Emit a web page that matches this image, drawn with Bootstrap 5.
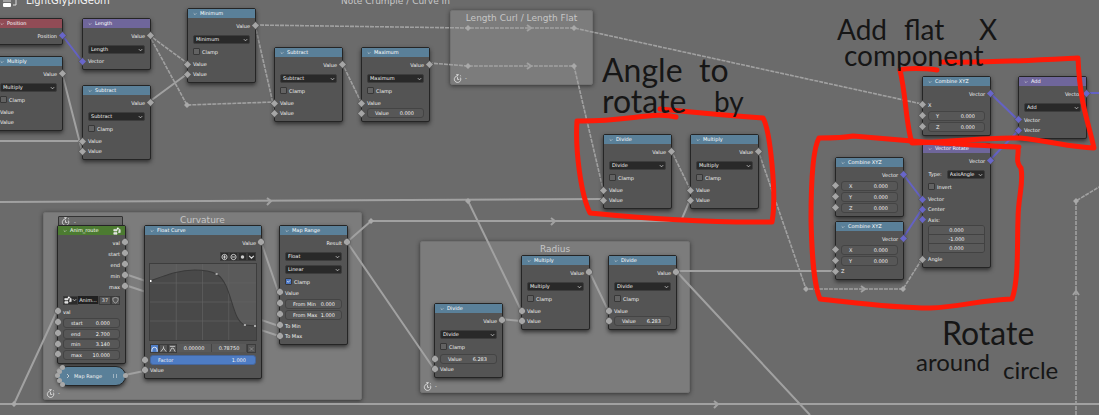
<!DOCTYPE html>
<html lang="en">
<head>
<meta charset="utf-8">
<meta name="viewport" content="width=device-width, initial-scale=1">
<title>LightGlyphGeom</title>
<link rel="stylesheet" href="https://cdn.jsdelivr.net/npm/bootstrap@5.3.0/dist/css/bootstrap.min.css">
<style>
body{background:#6b6b6b;color:#f2f2f2;font:5px/10px "DejaVu Sans",sans-serif}
.board{min-height:100vh}
.wires,.notes{position:absolute;inset:0;width:100%;height:100%}
.notes{pointer-events:none}
.wires path{fill:none;stroke:#a1a1a1;stroke-width:2}
.wires .dash{stroke-width:1.6;stroke-dasharray:4 1}
.wires .vec{stroke:#6462c4;stroke-width:2}
.wires .dot{fill:#a9a9a9;stroke:none}
.notes path{fill:none;stroke:#ff1a08;stroke-width:5;stroke-linecap:round;stroke-linejoin:round}
.pane{position:absolute;background:#7c7c7c;border:1px solid #727272;border-radius:2px;box-shadow:0 1px 4px #333;padding:2px 4px;width:270px;height:152px}
.pane h2,.titl{font-size:9px;line-height:11px;color:#c6c6c6;margin:0;text-align:center}
.titl{position:absolute;color:#c8c8c8}
.titl.main-name{font-size:10px;color:#f4f4f4}
.node{position:absolute;width:69px;background:#545454;border:1px solid #252525;border-radius:2px;box-shadow:0 2px 4px #2f2f2f;padding-bottom:3px}
.head{background:#5a8099;height:9px;line-height:9px;padding-left:5px;margin-bottom:2px;gap:3px;color:#fff}
.head.violet{background:#6f669b}.head.wine{background:#914c56}.head.leaf{background:#4c7b31}
.fold{border:0;background:none;padding:0;width:4px;line-height:0;display:flex;color:#ddd}
.line{position:relative;height:10px;padding:0 5px;display:flex;align-items:center}
.line.tall,.line.res{height:11px}
.line.tick{margin-bottom:2px}
.res{justify-content:flex-end}
.in::before,.res::after{content:"";position:absolute;width:5px;height:5px;background:#a6a6a6;box-shadow:0 0 0 .5px #555;transform:rotate(45deg);left:-3px;top:3px}
.res::after{left:auto;right:-3px}
.round .in::before,.round .res::after{border-radius:50%;width:6px;height:6px;top:2px}
.vin.in::before,.vout.res::after{background:#6866ca}
.node select{display:block;margin:4px 5px 2px;height:9px;padding:0 7px 0 2px;border:1px solid #3d3d3d;border-radius:2px;background:#292929 url("data:image/svg+xml,%3Csvg xmlns='http://www.w3.org/2000/svg' viewBox='0 0 6 4'%3E%3Cpath d='M1 1l2 2 2-2' fill='none' stroke='%23ccc'/%3E%3C/svg%3E") no-repeat right 1px center/5px 4px;font:inherit;line-height:7px;color:inherit;appearance:none;width:calc(100% - 10px)}
.node .type-row select{margin-left:5px}
.node .form-check-input{width:7px;height:7px;margin:0 2px 0 0;border:1px solid #373737;border-radius:1px;background-color:#626262;flex:none}
.node .form-check-input:checked{background-color:#4b76c2}
.field{display:flex;align-items:center;flex:1;height:10px;border:1px solid #444;border-radius:3px;background:#575757;padding:0 9px 0 7px;min-width:0;line-height:8px}
.field.snug{padding:0 6px 0 7px}
.field input,.cell{border:0;background:none;color:inherit;font:inherit;padding:0;min-width:0;flex:1;text-align:right;height:8px;width:0}
.field.blue{background:#4e7cc4;border-color:#45669c}
.cell{text-align:center;background:#5a5a5a;border-right:1px solid #454545}
.cell.dark{background:#202020}
.stack{margin:0 5px 1px;border:1px solid #424242;border-radius:3px;overflow:hidden}
.stack input{display:block;width:100%;height:9px;border:0;border-bottom:1px solid #424242;background:#595959;color:inherit;font:inherit;text-align:center;padding:0}
.stack input:last-child{border:0;height:8px}
.tool{border:1px solid #3c3c3c;background:#2b2b2b;color:#ddd;padding:0;width:9px;height:9px;display:flex;align-items:center;justify-content:center;font:inherit;line-height:7px}
.tool svg{width:8px;height:8px}
.tool.on{background:#4e7cc4}.tool.mid{background:#555}
.tool.wide{width:15px}.tool.wide .arrow{width:5px;height:4px}.tool.users{width:12px}
.pick{margin:3px 0 1px}
.bar-top{margin:4px 5px 0}
.bar-low{margin:0 5px 2px}
.plot{display:block;margin:2px 4px 3px;width:calc(100% - 8px);height:78px;border:1px solid #3d3d3d}
.pill{border-radius:10px;background:#5a8099;height:20px;padding:0 8px}
.pill i{position:absolute;width:5px;height:5px;border-radius:50%;background:#a8a8a8}
.p1{left:2px;top:-2px}.p2{left:-1px;top:2px}.p3{left:-3px;top:6px}.p4{left:-1px;top:11px}.p5{left:2px;top:15px}.p6{right:-3px;top:6px}
.grip{width:4px;height:4px;border:1px solid #9fb4c2;border-width:0 1px}
.stub{position:absolute;width:65px;height:11px;border:1px solid #333;background:#6a6a6a;border-radius:1px;padding:0 2px}
.clock{width:9px;height:9px;flex:none}
.foot{position:absolute;left:2px;bottom:1px;display:flex;align-items:center;gap:3px}
.ink{position:absolute;font:28px/24px Lato,sans-serif;color:#161616;white-space:nowrap}
.ink.lg{font-size:32px}
.ink.sm{font-size:24px;line-height:20px}
/* canvas placement */
#pane-len{left:450px;top:10px;width:143px;height:75px}#pane-curv{left:43px;top:212px;width:319px;height:188px}#pane-rad{left:420px;top:241px}
#t-name{left:26px;top:-5px}#t-note{left:341px;top:-4px}
#n-pos{left:-6px;top:18px}#n-mul0{left:-6px;top:56px}#n-len{left:82px;top:18px}#n-sub0{left:82px;top:85px}
#n-min{left:187px;top:8px}#n-sub1{left:274px;top:47px}#n-max{left:361px;top:47px}
#n-div0{left:603px;top:134px}#n-mul1{left:690px;top:134px}
#n-xyz0{left:922px;top:76px}#n-add{left:1018px;top:76px}#n-rot{left:922px;top:143px}#n-xyz1{left:835px;top:157px}#n-xyz2{left:835px;top:221px}
#n-anim{left:57px;top:225px}#n-curve{left:144px;top:225px;width:118px}#n-range{left:279px;top:225px}#n-pill{left:57px;top:366px}#n-stub{left:58px;top:216px}
#n-div1{left:434px;top:303px}#n-mul2{left:521px;top:255px}#n-div2{left:608px;top:255px}
#i1{left:602px;top:58px}#i2{left:699px;top:58px}#i3{left:602px;top:89px}#i4{left:714px;top:89px}
#i5{left:837px;top:17px}#i6{left:904px;top:17px}#i7{left:979px;top:17px}#i8{left:844px;top:43px}
#i9{left:942px;top:321px}#i10{left:916px;top:352px}#i11{left:1003px;top:360px}
</style>
<script src="https://cdn.jsdelivr.net/npm/bootstrap@5.3.0/dist/js/bootstrap.bundle.min.js"></script>
</head>
<body>
<svg class="d-none">
<symbol id="chev" viewBox="0 0 6 4"><path d="M1 1l2 2 2-2" fill="none" stroke="currentColor" stroke-width=".9"/></symbol>
<symbol id="clk" viewBox="0 0 10 10"><path d="M8.2 4A3.6 3.6 0 1 1 5 2.2M3.5.8h3M5 .8v1.4M8 1.6l1 1M5 3.5V6h2" fill="none" stroke="#ddd"/></symbol>
<symbol id="tree" viewBox="0 0 10 10"><path d="M1 3h4v2H1zM1 7h4v2H1zM6.500 7h2.500V3.500L7.500 2" fill="#ddd" stroke="#eee" stroke-width=".8"/><circle cx="6" cy="2" r="1.300" fill="#fff"/></symbol>
</svg>
<main class="board position-relative overflow-hidden">
<section class="pane" id="pane-len"><h2>Length Curl / Length Flat</h2><div class="foot"><svg class="clock"><use href="#clk"/></svg><span>-</span></div></section>
<section class="pane" id="pane-curv"><h2>Curvature</h2><div class="foot"><svg class="clock"><use href="#clk"/></svg><span>-</span></div></section>
<section class="pane" id="pane-rad"><h2>Radius</h2><div class="foot"><svg class="clock"><use href="#clk"/></svg><span>-</span></div></section>

<svg class="wires" aria-hidden="true">
<path d="M0 141H82M62 73L80 143 82 151M149 102L187 74M0 202L603 199M468 201L521 310M347 242L371 221H681L690 200M347 242L434 369M501 319L521 321M589 271L608 310M676 271H835M676 271L810 415M0 404H1099M14 404L57 311M261 242L279 294M125 274L279 326M125 285L279 336M125 375L144 371M57 371L67 361"/>
<path class="dash" d="M149 35L187 63M149 35L187 105 274 102M255 25L468 28H574L922 104M255 25L275 112M342 63L361 102M429 63L468 66H574L603 189M671 150L690 189M758 150L806 289H903L922 259M1076 415V201L1099 187"/>
<path class="vec" d="M62 35L82 61M990 93L1018 120M990 160L1018 131M1087 93H1099M903 174L922 199M903 238L922 209"/>
<path d="M267 198l4 3-4 4M551 218l4 3-4 4M714 401l4 3-4 4M527 25l4 3-4 3M527 63l4 3-4 3M861 286l4 3-4 3M1073 295l3-4 3 4" stroke-width="1.500"/>
<path class="dot" d="M184 105l3-3 3 3-3 3zM465 28l3-3 3 3-3 3zM571 28l3-3 3 3-3 3zM465 66l3-3 3 3-3 3zM571 66l3-3 3 3-3 3zM465 201l3-3 3 3-3 3zM368 221l3-3 3 3-3 3zM803 289l3-3 3 3-3 3zM900 289l3-3 3 3-3 3zM1073 201l3-3 3 3-3 3zM11 404l3-3 3 3-3 3z"/>
</svg>

<div class="titl main-name" id="t-name">LightGlyphGeom</div>
<svg class="position-absolute top-0 start-0" width="20" height="8" aria-hidden="true"><rect x="3" y="3" width="8" height="4" rx="1" fill="#fff"/><path d="M3 1h8M13 5h3V0" fill="none" stroke="#ddd"/></svg>
<div class="titl" id="t-note">Note Crumple / Curve In</div>

<article class="node" id="n-pos"><div class="head wine d-flex align-items-center"><button class="fold" aria-label="Collapse"><svg width="5" height="4"><use href="#chev"/></svg></button>Position</div><div class="line res vout">Position</div></article>

<article class="node" id="n-mul0"><div class="head d-flex align-items-center"><button class="fold" aria-label="Collapse"><svg width="5" height="4"><use href="#chev"/></svg></button>Multiply</div><div class="line res">Value</div><select aria-label="Operation"><option>Multiply</option></select><label class="line tall tick"><input type="checkbox" class="form-check-input">Clamp</label><div class="line in">Value</div><div class="line in">Value</div></article>

<article class="node" id="n-len"><div class="head violet d-flex align-items-center"><button class="fold" aria-label="Collapse"><svg width="5" height="4"><use href="#chev"/></svg></button>Length</div><div class="line res">Value</div><select aria-label="Operation"><option>Length</option></select><div class="line in vin">Vector</div></article>

<article class="node" id="n-sub0"><div class="head d-flex align-items-center"><button class="fold" aria-label="Collapse"><svg width="5" height="4"><use href="#chev"/></svg></button>Subtract</div><div class="line res">Value</div><select aria-label="Operation"><option>Subtract</option></select><label class="line tall tick"><input type="checkbox" class="form-check-input">Clamp</label><div class="line in">Value</div><div class="line in">Value</div></article>

<article class="node" id="n-min"><div class="head d-flex align-items-center"><button class="fold" aria-label="Collapse"><svg width="5" height="4"><use href="#chev"/></svg></button>Minimum</div><div class="line res">Value</div><select aria-label="Operation"><option>Minimum</option></select><label class="line tall tick"><input type="checkbox" class="form-check-input">Clamp</label><div class="line in">Value</div><div class="line in">Value</div></article>

<article class="node" id="n-sub1"><div class="head d-flex align-items-center"><button class="fold" aria-label="Collapse"><svg width="5" height="4"><use href="#chev"/></svg></button>Subtract</div><div class="line res">Value</div><select aria-label="Operation"><option>Subtract</option></select><label class="line tall tick"><input type="checkbox" class="form-check-input">Clamp</label><div class="line in">Value</div><div class="line in">Value</div></article>

<article class="node" id="n-max"><div class="head d-flex align-items-center"><button class="fold" aria-label="Collapse"><svg width="5" height="4"><use href="#chev"/></svg></button>Maximum</div><div class="line res">Value</div><select aria-label="Operation"><option>Maximum</option></select><label class="line tall tick"><input type="checkbox" class="form-check-input">Clamp</label><div class="line in">Value</div><div class="line in"><label class="field">Value<input value="0.000"></label></div></article>

<article class="node" id="n-div0"><div class="head d-flex align-items-center"><button class="fold" aria-label="Collapse"><svg width="5" height="4"><use href="#chev"/></svg></button>Divide</div><div class="line res">Value</div><select aria-label="Operation"><option>Divide</option></select><label class="line tall tick"><input type="checkbox" class="form-check-input">Clamp</label><div class="line in">Value</div><div class="line in">Value</div></article>

<article class="node" id="n-mul1"><div class="head d-flex align-items-center"><button class="fold" aria-label="Collapse"><svg width="5" height="4"><use href="#chev"/></svg></button>Multiply</div><div class="line res">Value</div><select aria-label="Operation"><option>Multiply</option></select><label class="line tall tick"><input type="checkbox" class="form-check-input">Clamp</label><div class="line in">Value</div><div class="line in">Value</div></article>

<article class="node" id="n-rot"><div class="head violet d-flex align-items-center"><button class="fold" aria-label="Collapse"><svg width="5" height="4"><use href="#chev"/></svg></button>Vector Rotate</div><div class="line res vout">Vector</div><label class="d-flex align-items-center ps-1 type-row">&nbsp;Type:<select class="flex-fill"><option>AxisAngle</option></select></label><label class="line tall tick"><input type="checkbox" class="form-check-input">Invert</label><div class="line in vin">Vector</div><div class="line in vin">Center</div><div class="line tall in vin">Axis:</div><div class="stack"><input value="0.000" aria-label="Axis X"><input value="-1.000" aria-label="Axis Y"><input value="0.000" aria-label="Axis Z"></div><div class="line in">Angle</div></article>

<article class="node" id="n-xyz0"><div class="head d-flex align-items-center"><button class="fold" aria-label="Collapse"><svg width="5" height="4"><use href="#chev"/></svg></button>Combine XYZ</div><div class="line res vout">Vector</div><div class="line tall in">X</div><div class="line tall in"><label class="field">Y<input value="0.000"></label></div><div class="line tall in"><label class="field">Z<input value="0.000"></label></div></article>

<article class="node" id="n-add"><div class="head violet d-flex align-items-center"><button class="fold" aria-label="Collapse"><svg width="5" height="4"><use href="#chev"/></svg></button>Add</div><div class="line res vout">Vector</div><select aria-label="Operation"><option>Add</option></select><div class="line tall in vin">Vector</div><div class="line in vin">Vector</div></article>

<article class="node" id="n-xyz1"><div class="head d-flex align-items-center"><button class="fold" aria-label="Collapse"><svg width="5" height="4"><use href="#chev"/></svg></button>Combine XYZ</div><div class="line res vout">Vector</div><div class="line tall in"><label class="field">X<input value="0.000"></label></div><div class="line tall in"><label class="field">Y<input value="0.000"></label></div><div class="line tall in"><label class="field">Z<input value="0.000"></label></div></article>

<article class="node" id="n-xyz2"><div class="head d-flex align-items-center"><button class="fold" aria-label="Collapse"><svg width="5" height="4"><use href="#chev"/></svg></button>Combine XYZ</div><div class="line res vout">Vector</div><div class="line tall in"><label class="field">X<input value="0.000"></label></div><div class="line tall in"><label class="field">Y<input value="0.000"></label></div><div class="line in">Z</div></article>

<div class="stub d-flex align-items-center gap-1" id="n-stub"><svg class="clock"><use href="#clk"/></svg><span>-</span></div>
<article class="node round" id="n-anim"><div class="head leaf d-flex align-items-center"><button class="fold" aria-label="Collapse"><svg width="5" height="4"><use href="#chev"/></svg></button>Anim_route<svg class="ms-auto me-1" width="8" height="8"><use href="#tree"/></svg></div><div class="line res">val</div><div class="line res">start</div><div class="line res">end</div><div class="line res">min</div><div class="line res">max</div>
<div class="line pick"><button class="tool wide" aria-label="Browse"><svg><use href="#tree"/></svg><svg class="arrow"><use href="#chev"/></svg></button><input class="cell dark" value="Anim..." aria-label="Group"><button class="tool mid users">37</button><button class="tool mid" aria-label="Fake user"><svg viewBox="0 0 8 8"><path d="M4 1l3 1v2Q7 6 4 7.500 1 6 1 4V2z" fill="none" stroke="#ccc" stroke-width=".7"/></svg></button></div>
<div class="line tall in">val</div><div class="line tall in"><label class="field">start<input value="0.000"></label></div><div class="line tall in"><label class="field">end<input value="2.700"></label></div><div class="line in"><label class="field">min<input value="3.140"></label></div><div class="line tall in"><label class="field">max<input value="10.000"></label></div></article>

<article class="node round" id="n-curve"><div class="head d-flex align-items-center"><button class="fold" aria-label="Collapse"><svg width="5" height="4"><use href="#chev"/></svg></button>Float Curve</div><div class="line res">Value</div>
<div class="d-flex justify-content-end bar-top"><button class="tool" aria-label="Zoom in"><svg viewBox="0 0 8 8"><circle cx="4" cy="4" r="3" fill="none" stroke="#ddd"/><path d="M2 4h4M4 2v4" stroke="#ddd"/></svg></button><button class="tool" aria-label="Zoom out"><svg viewBox="0 0 8 8"><circle cx="4" cy="4" r="3" fill="none" stroke="#ddd"/><path d="M2 4h4" stroke="#ddd"/></svg></button><button class="tool" aria-label="Clipping"><svg viewBox="0 0 8 8"><circle cx="4" cy="4" r="2" fill="#ccc"/></svg></button><button class="tool" aria-label="Tools"><svg viewBox="0 0 6 6"><path d="M1 2l2 2 2-2" fill="none" stroke="#ddd"/></svg></button></div>
<svg class="plot" viewBox="0 0 105 76" preserveAspectRatio="none"><rect width="105" height="76" fill="#5a5a5a"/><path d="M0 17C14 12 28 6 44 6 52 6 60 7 66 10 82 20 80 56 94 61L105 62V76H0z" fill="#494949"/><path d="M26 0v76M52 0v76M78 0v76M0 19h105M0 38h105M0 57h105" stroke="#666" stroke-width=".6"/><path d="M0 17C14 12 28 6 44 6 52 6 60 7 66 10 82 20 80 56 94 61L105 62" fill="none" stroke="#3a3a3a"/><path d="M0 16h1.500v2H0z" fill="#fff"/><path d="M65 9h2v2h-2zM93 60h2v2h-2zM103 61h2v2h-2z" fill="#aaa"/></svg>
<div class="d-flex bar-low"><button class="tool on" aria-label="Auto handle"><svg viewBox="0 0 8 8"><path d="M1 7V5Q1 2 4 2t3 3v2" fill="none" stroke="#fff" stroke-width=".9"/></svg></button><button class="tool mid" aria-label="Vector handle"><svg viewBox="0 0 8 8"><path d="M1 7l3-4 3 4M4 1v2" fill="none" stroke="#ddd" stroke-width=".9"/></svg></button><button class="tool mid" aria-label="Auto clamped handle"><svg viewBox="0 0 8 8"><path d="M1 7l2-4h2l2 4M1 1h6" fill="none" stroke="#ddd" stroke-width=".9"/></svg></button><input class="cell" value="0.00000" aria-label="X"><input class="cell" value="0.78750" aria-label="Y"><button class="tool mid" aria-label="Delete point"><svg viewBox="0 0 8 8"><path d="M2 2l4 4M6 2L2 6" stroke="#999" stroke-width=".8"/></svg></button></div>
<div class="line in"><label class="field blue">Factor<input value="1.000"></label></div><div class="line in">Value</div></article>

<article class="node round" id="n-range"><div class="head d-flex align-items-center"><button class="fold" aria-label="Collapse"><svg width="5" height="4"><use href="#chev"/></svg></button>Map Range</div><div class="line res">Result</div><select aria-label="Data type"><option>Float</option></select><select aria-label="Interpolation"><option>Linear</option></select><label class="line tall"><input type="checkbox" class="form-check-input" checked>Clamp</label><div class="line tall in">Value</div><div class="line tall in"><label class="field snug">From Min<input value="0.000"></label></div><div class="line tall in"><label class="field snug">From Max<input value="1.000"></label></div><div class="line tall in">To Min</div><div class="line in">To Max</div></article>

<article class="node pill d-flex align-items-center gap-1" id="n-pill"><button class="fold" aria-label="Expand"><svg width="4" height="6" viewBox="0 0 4 6"><path d="M1 1l2 2-2 2" fill="none" stroke="#ddd" stroke-width=".8"/></svg></button>Map Range<span class="ms-auto grip"></span><i class="p1"></i><i class="p2"></i><i class="p3"></i><i class="p4"></i><i class="p5"></i><i class="p6"></i></article>

<article class="node round" id="n-div1"><div class="head d-flex align-items-center"><button class="fold" aria-label="Collapse"><svg width="5" height="4"><use href="#chev"/></svg></button>Divide</div><div class="line res">Value</div><select aria-label="Operation"><option>Divide</option></select><label class="line tall tick"><input type="checkbox" class="form-check-input">Clamp</label><div class="line in"><label class="field">Value<input value="6.283"></label></div><div class="line in">Value</div></article>

<article class="node round" id="n-mul2"><div class="head d-flex align-items-center"><button class="fold" aria-label="Collapse"><svg width="5" height="4"><use href="#chev"/></svg></button>Multiply</div><div class="line res">Value</div><select aria-label="Operation"><option>Multiply</option></select><label class="line tall tick"><input type="checkbox" class="form-check-input">Clamp</label><div class="line in">Value</div><div class="line in">Value</div></article>

<article class="node round" id="n-div2"><div class="head d-flex align-items-center"><button class="fold" aria-label="Collapse"><svg width="5" height="4"><use href="#chev"/></svg></button>Divide</div><div class="line res">Value</div><select aria-label="Operation"><option>Divide</option></select><label class="line tall tick"><input type="checkbox" class="form-check-input">Clamp</label><div class="line in">Value</div><div class="line in"><label class="field">Value<input value="6.283"></label></div></article>

<svg class="notes" aria-hidden="true">
<path d="M676 117C655 111 625 122 577 121 575 150 581 195 590 213 640 218 700 223 772 222 777 195 770 130 763 118 735 116 690 112 660 109"/>
<path d="M937 70C925 68 905 68 900 70 906 95 906 125 912 143 950 142 985 137 1020 138 1050 141 1070 147 1094 148 1088 120 1080 105 1078 58 1040 60 990 63 942 62"/>
<path d="M1019 147C985 146 940 143 912 141L853 136Q843 138 819 138C812 150 811 190 811 220 812 260 814 285 820 299 850 302 890 308 930 308 960 307 980 300 1012 299 1019 280 1017 240 1018 220 1018 195 1024 185 1021 168 1015 162 1019 155 1018 148"/>
</svg>
<span class="ink lg" id="i1">Angle</span><span class="ink lg" id="i2">to</span><span class="ink lg" id="i3">rotate</span><span class="ink" id="i4">by</span>
<span class="ink" id="i5">Add</span><span class="ink" id="i6">flat</span><span class="ink" id="i7">X</span><span class="ink" id="i8">component</span>
<span class="ink lg" id="i9">Rotate</span><span class="ink sm" id="i10">around</span><span class="ink sm" id="i11">circle</span>
</main>
</body>
</html>
